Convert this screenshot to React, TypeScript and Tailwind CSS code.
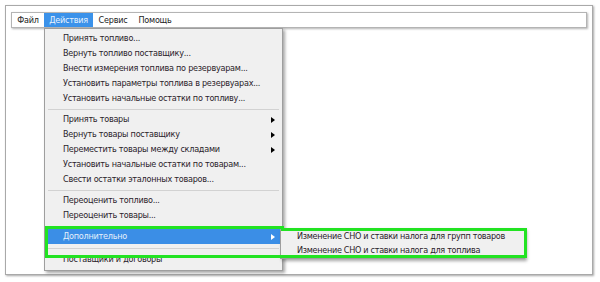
const font = { fontFamily: '"DejaVu Sans Condensed", "DejaVu Sans", sans-serif' };

type Item = { label: string; sub?: boolean; active?: boolean } | "sep";

const items: Item[] = [
  { label: "Принять топливо..." },
  { label: "Вернуть топливо поставщику..." },
  { label: "Внести измерения топлива по резервуарам..." },
  { label: "Установить параметры топлива в резервуарах..." },
  { label: "Установить начальные остатки по топливу..." },
  "sep",
  { label: "Принять товары", sub: true },
  { label: "Вернуть товары поставщику", sub: true },
  { label: "Переместить товары между складами", sub: true },
  { label: "Установить начальные остатки по товарам..." },
  { label: "Свести остатки эталонных товаров..." },
  "sep",
  { label: "Переоценить топливо..." },
  { label: "Переоценить товары..." },
  "sep",
  { label: "Дополнительно", sub: true, active: true },
  "sep",
  { label: "Поставщики и договоры" },
];

const menubar = [
  { label: "Файл", w: "w-[32px]" },
  { label: "Действия", w: "w-[49px]", active: true },
  { label: "Сервис", w: "w-[40px]" },
  { label: "Помощь", w: "w-[44px]" },
];

function Arrow({ white }: { white?: boolean }) {
  return (
    <span
      className={
        "h-0 w-0 border-y-[3.5px] border-l-[4px] border-y-transparent " +
        (white ? "border-l-white" : "border-l-black")
      }
    />
  );
}

export default function App() {
  return (
    <div className="relative h-[282px] w-[600px] whitespace-nowrap bg-white pb-[7px] pl-[5px] pr-[7px] pt-[5px] text-[9px] leading-none tracking-[-0.25px]" style={font}>
      <div className="h-full border border-[#a9a9a9] bg-white px-[5px] pt-[6px] shadow-[1px_1px_2px_rgba(0,0,0,0.35)]">
        <div className="flex h-[16px] border border-[#b4b4b4] bg-white text-[#1b1b1b] shadow-[1px_1px_2px_rgba(0,0,0,0.3)]">
          {menubar.map((m) => (
            <div
              key={m.label}
              className={
                "flex items-center justify-center " +
                m.w +
                (m.active ? " bg-[#3b92ea] text-[#e8f2ff]" : "")
              }
            >
              {m.label}
            </div>
          ))}
        </div>
      </div>

      {/* dropdown */}
      <div className="absolute left-[44px] top-[28px] flex h-[243px] w-[239px] flex-col border border-[#9e9e9e] bg-[#f0f0f0] px-[2px] py-[2px] text-[#2a1c2a] shadow-[2px_2px_3px_rgba(0,0,0,0.35)]">
        {items.map((it, i) =>
          it === "sep" ? (
            <div key={i} className={"flex shrink-0 items-center px-[1px] " + (i === 16 ? "h-[8px]" : "h-[6px]")}>
              <div className="h-px w-full bg-[#d2d2d2]" />
            </div>
          ) : (
            <div
              key={i}
              className={
                "flex h-[15px] shrink-0 items-center justify-between pl-[16px] pr-[5px] " +
                (it.active ? "bg-[#3b8ee6] text-[#e6f0fb]" : "")
              }
            >
              <span>{it.label}</span>
              {it.sub && <Arrow white={it.active} />}
            </div>
          )
        )}
      </div>

      {/* submenu */}
      <div className="absolute left-[280px] top-[228px] flex h-[31px] w-[245px] flex-col border border-[#9e9e9e] bg-[#f0f0f0] py-[1px] text-[#2a1c2a] shadow-[2px_2px_3px_rgba(0,0,0,0.35)]">
        <div className="flex h-[15px] items-center pl-[16px] tracking-[-0.3px]">Изменение СНО и ставки налога для групп товаров</div>
        <div className="flex h-[14px] items-center pl-[16px] tracking-[-0.3px]">Изменение СНО и ставки налога для топлива</div>
      </div>

      {/* annotation outline */}
      <svg className="pointer-events-none absolute left-0 top-0" width="600" height="282">
        <path
          d="M46.5 227.5 H282.5 V229.5 H525.5 V256.5 H46.5 Z"
          fill="none"
          stroke="#22e322"
          strokeWidth="3"
        />
      </svg>
    </div>
  );
}
